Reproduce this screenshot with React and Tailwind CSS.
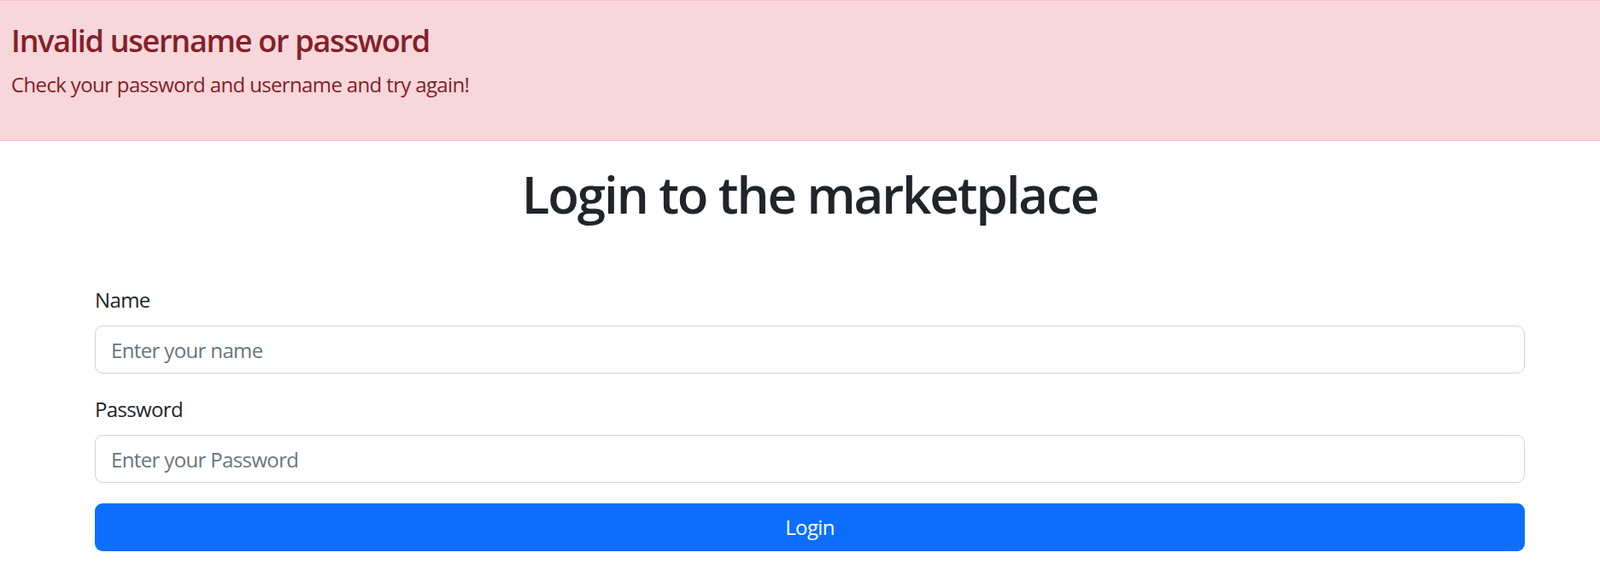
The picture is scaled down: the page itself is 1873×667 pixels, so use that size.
export default function App() {
  return (
    <div className="min-h-screen bg-white font-['Open_Sans',sans-serif] tracking-[-0.04em] text-[#212529]">
      {/* Error alert */}
      <div className="h-[165px] border-y border-[#f5c2c7] bg-[#f8d7da] px-[13px] pt-[25px] text-[#842029]">
        <h4 className="mb-[12px] text-[36px] font-semibold leading-[1.2] tracking-[-0.035em]">Invalid username or password</h4>
        <p className="text-[24px] leading-[1.5]">Check your password and username and try again!</p>
      </div>

      <div className="ml-[111px] w-[1674px]">
        <h1 className="mt-[26px] text-center text-[60px] font-semibold leading-[1.2] tracking-[-0.035em]">Login to the marketplace</h1>

        <form className="mt-[70px]" onSubmit={(e) => e.preventDefault()}>
          <div className="mb-[24px]">
            <label className="mb-[12px] block text-[24px] leading-[1.5]">Name</label>
            <input
              type="text"
              placeholder="Enter your name"
              className="block h-[56px] w-full rounded-[9px] border border-[#ced4da] px-[18px] text-[24px] outline-none placeholder:text-[#6c757d]"
            />
          </div>
          <div className="mb-[24px]">
            <label className="mb-[12px] block text-[24px] leading-[1.5]">Password</label>
            <input
              type="password"
              placeholder="Enter your Password"
              className="block h-[56px] w-full rounded-[9px] border border-[#ced4da] px-[18px] text-[24px] outline-none placeholder:text-[#6c757d]"
            />
          </div>
          <button
            type="submit"
            className="block h-[56px] w-full rounded-[9px] bg-[#0d6efd] text-[24px] text-white"
          >
            Login
          </button>
        </form>
      </div>
    </div>
  )
}
